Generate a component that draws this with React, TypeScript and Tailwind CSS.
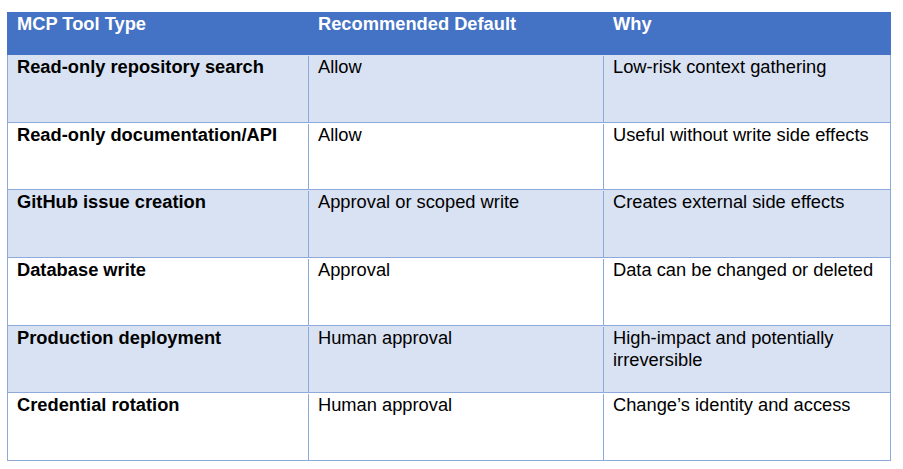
const rows: { tool: string; def: string; why: string; h: string }[] = [
  { tool: 'Read-only repository search', def: 'Allow', why: 'Low-risk context gathering', h: 'h-[68px]' },
  { tool: 'Read-only documentation/API', def: 'Allow', why: 'Useful without write side effects', h: 'h-[67px]' },
  { tool: 'GitHub issue creation', def: 'Approval or scoped write', why: 'Creates external side effects', h: 'h-[68px]' },
  { tool: 'Database write', def: 'Approval', why: 'Data can be changed or deleted', h: 'h-[68px]' },
  { tool: 'Production deployment', def: 'Human approval', why: 'High-impact and potentially irreversible', h: 'h-[67px]' },
  { tool: 'Credential rotation', def: 'Human approval', why: 'Change’s identity and access', h: 'h-[68px]' },
]

export default function App() {
  return (
    <div className="min-h-screen bg-white pt-[12px] pl-[7px] font-['Liberation_Sans',Arial,sans-serif] text-[18.3px] leading-[22px] text-black">
      <div className="w-[884px]">
        {/* header */}
        <div className="grid h-[43px] grid-cols-[301px_295px_288px] bg-[#4472C4] pt-[1px] font-bold text-white">
          <div className="pl-[10px]">MCP Tool Type</div>
          <div className="pl-[10px]">Recommended Default</div>
          <div className="pl-[10px]">Why</div>
        </div>
        {rows.map((r, i) => (
          <div
            key={r.tool}
            className={`grid grid-cols-[300px_295px_287px] border-x border-b border-[#8EAADB] pt-[1px] ${r.h} ${i % 2 === 0 ? 'bg-[#D9E2F3]' : 'bg-white'}`}
          >
            <div className="pl-[9px] font-bold">{r.tool}</div>
            <div className="border-l border-[#8EAADB] pl-[9px]">{r.def}</div>
            <div className="border-l border-[#8EAADB] pl-[9px] pr-[6px]">{r.why}</div>
          </div>
        ))}
      </div>
    </div>
  )
}
